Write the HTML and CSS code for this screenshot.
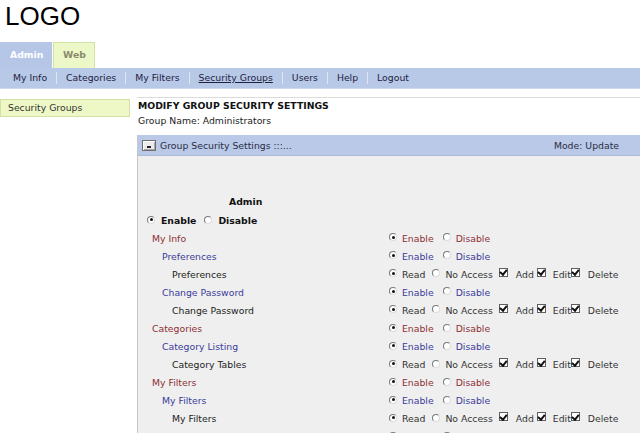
FILE: index.html
```html
<!DOCTYPE html>
<html>
<head>
<meta charset="utf-8">
<link rel="stylesheet" href="styles.css">
</head>
<body>
<div class="logo">LOGO</div>
<div class="tabs">
  <div class="tab tab-admin">Admin</div>
  <div class="tab tab-web">Web</div>
</div>
<nav class="nav">
  <a class="nav-link">My Info</a><span class="sep"></span>
  <a class="nav-link">Categories</a><span class="sep"></span>
  <a class="nav-link">My Filters</a><span class="sep"></span>
  <a class="nav-link current">Security Groups</a><span class="sep"></span>
  <a class="nav-link">Users</a><span class="sep"></span>
  <a class="nav-link">Help</a><span class="sep"></span>
  <a class="nav-link">Logout</a>
</nav>
<div class="main">
  <aside class="side">
    <div class="side-item">Security Groups</div>
  </aside>
  <section class="content">
    <h1 class="title">MODIFY GROUP SECURITY SETTINGS</h1>
    <div class="gname">Group Name: Administrators</div>
    <div class="panel">
      <div class="panel-head">
        <span class="minbtn"><span class="dash"></span></span>
        <span class="ptitle">Group Security Settings :::...</span>
        <span class="mode">Mode: Update</span>
      </div>
      <div class="panel-body">
        <div class="admin-title">Admin</div>
        <div class="admin-toggle">
          <span class="radio on"></span><span class="lbl b">Enable</span>
          <span class="radio"></span><span class="lbl b">Disable</span>
        </div>

        <div class="row">
          <div class="name l1">My Info</div>
          <div class="ctrl c1"><span class="radio on"></span><span class="lbl">Enable</span><span class="radio"></span><span class="lbl">Disable</span></div>
        </div>
        <div class="row">
          <div class="name l2">Preferences</div>
          <div class="ctrl c2"><span class="radio on"></span><span class="lbl">Enable</span><span class="radio"></span><span class="lbl">Disable</span></div>
        </div>
        <div class="row">
          <div class="name l3">Preferences</div>
          <div class="ctrl c3"><span class="radio on"></span><span class="lbl">Read</span><span class="radio"></span><span class="lbl">No Access</span><span class="cb cb-add"></span><span class="lbl">Add</span><span class="cb cb-edit"></span><span class="lbl">Edit</span><span class="cb cb-del"></span><span class="lbl">Delete</span></div>
        </div>
        <div class="row">
          <div class="name l2">Change Password</div>
          <div class="ctrl c2"><span class="radio on"></span><span class="lbl">Enable</span><span class="radio"></span><span class="lbl">Disable</span></div>
        </div>
        <div class="row">
          <div class="name l3">Change Password</div>
          <div class="ctrl c3"><span class="radio on"></span><span class="lbl">Read</span><span class="radio"></span><span class="lbl">No Access</span><span class="cb cb-add"></span><span class="lbl">Add</span><span class="cb cb-edit"></span><span class="lbl">Edit</span><span class="cb cb-del"></span><span class="lbl">Delete</span></div>
        </div>
        <div class="row">
          <div class="name l1">Categories</div>
          <div class="ctrl c1"><span class="radio on"></span><span class="lbl">Enable</span><span class="radio"></span><span class="lbl">Disable</span></div>
        </div>
        <div class="row">
          <div class="name l2">Category Listing</div>
          <div class="ctrl c2"><span class="radio on"></span><span class="lbl">Enable</span><span class="radio"></span><span class="lbl">Disable</span></div>
        </div>
        <div class="row">
          <div class="name l3">Category Tables</div>
          <div class="ctrl c3"><span class="radio on"></span><span class="lbl">Read</span><span class="radio"></span><span class="lbl">No Access</span><span class="cb cb-add"></span><span class="lbl">Add</span><span class="cb cb-edit"></span><span class="lbl">Edit</span><span class="cb cb-del"></span><span class="lbl">Delete</span></div>
        </div>
        <div class="row">
          <div class="name l1">My Filters</div>
          <div class="ctrl c1"><span class="radio on"></span><span class="lbl">Enable</span><span class="radio"></span><span class="lbl">Disable</span></div>
        </div>
        <div class="row">
          <div class="name l2">My Filters</div>
          <div class="ctrl c2"><span class="radio on"></span><span class="lbl">Enable</span><span class="radio"></span><span class="lbl">Disable</span></div>
        </div>
        <div class="row">
          <div class="name l3">My Filters</div>
          <div class="ctrl c3"><span class="radio on"></span><span class="lbl">Read</span><span class="radio"></span><span class="lbl">No Access</span><span class="cb cb-add"></span><span class="lbl">Add</span><span class="cb cb-edit"></span><span class="lbl">Edit</span><span class="cb cb-del"></span><span class="lbl">Delete</span></div>
        </div>
        <div class="row">
          <div class="name l1">Security Groups</div>
          <div class="ctrl c1"><span class="radio on"></span><span class="lbl">Enable</span><span class="radio"></span><span class="lbl">Disable</span></div>
        </div>
      </div>
    </div>
  </section>
</div>
</body>
</html>
```
FILE: styles.css
```css
html, body {
  margin: 0;
  padding: 0;
  height: 433px;
  overflow: hidden;
  background: #ffffff;
}
body {
  font-family: "DejaVu Sans", Verdana, sans-serif;
  font-size: 9.3px;
  color: #222222;
}
.logo {
  font-family: "Liberation Sans", Arial, sans-serif;
  font-size: 26px;
  line-height: 30px;
  padding: 1px 0 0 5px;
  height: 42px;
  box-sizing: border-box;
  color: #000000;
}
.tabs {
  display: flex;
  height: 26px;
}
.tab {
  font-weight: bold;
  line-height: 26px;
  box-sizing: border-box;
}
.tab-admin {
  width: 52px;
  background: #b5c6e6;
  color: #ffffff;
  padding-left: 10px;
}
.tab-web {
  margin-left: 1px;
  width: 42px;
  background: #edf8c8;
  border: 1px solid #d3e3a6;
  border-bottom: none;
  color: #8b8b6c;
  line-height: 24px;
  padding-left: 9px;
}
.nav {
  display: flex;
  align-items: center;
  height: 20px;
  background: #b8c9e8;
  border-bottom: 1px solid #cdd9ee;
  padding-left: 4px;
}
.nav-link {
  color: #1e2140;
  padding: 0 9px;
  line-height: 20px;
}
.nav-link.current {
  text-decoration: underline;
}
.sep {
  width: 1px;
  height: 12px;
  background: #dfe6f3;
}
.main {
  display: flex;
  margin-top: 8px;
}
.side {
  width: 130px;
  padding-top: 2px;
}
.side-item {
  height: 18px;
  box-sizing: border-box;
  background: #eef8c6;
  border: 1px solid #d3e1a3;
  line-height: 16px;
  padding-left: 7px;
  color: #333333;
}
.content {
  flex: 1;
  margin-left: 7px;
  border-top: 1px solid #dcdcdc;
}
.title {
  margin: 0;
  padding-left: 1px;
  font-size: 9.3px;
  font-weight: bold;
  line-height: 15px;
  color: #111111;
}
.gname {
  padding-left: 1px;
  line-height: 15px;
  margin-bottom: 7px;
}
.panel {
  border-left: 1px solid #c6c6c6;
}
.panel-head {
  display: flex;
  align-items: center;
  height: 21px;
  box-sizing: border-box;
  background: #b9c9e7;
  border-bottom: 1px solid #aab9d8;
  padding: 0 21px 0 4px;
  color: #2a2d45;
}
.minbtn {
  position: relative;
  width: 14px;
  height: 11px;
  box-sizing: border-box;
  border: 1px solid #6f6f6f;
  background: #ececec;
  box-shadow: inset 1px 1px 0 #ffffff, inset -1px -1px 0 #a8a8a8;
  margin-right: 4px;
}
.dash {
  position: absolute;
  left: 4px;
  bottom: 2px;
  width: 4px;
  height: 2px;
  background: #222222;
}
.ptitle {
  flex: 1;
}
.panel-body {
  background: #efefef;
  padding-top: 38px;
  height: 400px;
}
.admin-title {
  font-weight: bold;
  line-height: 16px;
  padding-left: 91px;
  color: #111111;
}
.admin-toggle {
  display: flex;
  align-items: center;
  height: 17px;
  margin-top: 2px;
  padding-left: 9px;
}
.admin-toggle .lbl {
  margin-left: 6px;
  margin-right: 8px;
  color: #111111;
}
.lbl.b {
  font-weight: bold;
}
.row {
  display: grid;
  grid-template-columns: 251px 1fr;
  height: 18.1px;
  align-items: center;
}
.name.l1 { padding-left: 14px; color: #8e2f35; }
.name.l2 { padding-left: 24px; color: #3b3b9b; }
.name.l3 { padding-left: 34px; color: #222222; }
.ctrl {
  display: flex;
  align-items: center;
}
.ctrl .lbl {
  margin-left: 5px;
  margin-right: 9px;
}
.c1 .lbl { color: #8e2f35; }
.c2 .lbl { color: #3b3b9b; }
.c3 .lbl { color: #333333; }
.c3 .lbl { margin-right: 7px; }
.radio {
  position: relative;
  width: 8px;
  height: 8px;
  flex: none;
  box-sizing: border-box;
  border-radius: 50%;
  border: 1px solid;
  border-color: #7a7a7a #dcdcdc #dcdcdc #7a7a7a;
  background: #ffffff;
  margin-top: -2px;
}
.radio.on::after {
  content: "";
  position: absolute;
  left: 1.5px;
  top: 1.5px;
  width: 3px;
  height: 3px;
  border-radius: 50%;
  background: #111111;
}
.cb {
  position: relative;
  width: 9px;
  height: 9px;
  flex: none;
  box-sizing: border-box;
  border: 1px solid #5e5e5e;
  background: #ffffff;
  margin-top: -4px;
}
.cb::after {
  content: "";
  position: absolute;
  left: 1.5px;
  top: -0.5px;
  width: 2.5px;
  height: 5px;
  border: solid #111111;
  border-width: 0 2px 2px 0;
  transform: rotate(40deg);
}
.c3 .cb-add { margin-left: -1px; }
.c3 .cb-edit { margin-left: -4px; }
.c3 .cb-del { margin-left: -7px; }
.c3 .cb + .lbl { margin-left: 8px; }
.c3 .cb-edit + .lbl { margin-left: 7px; }
```
